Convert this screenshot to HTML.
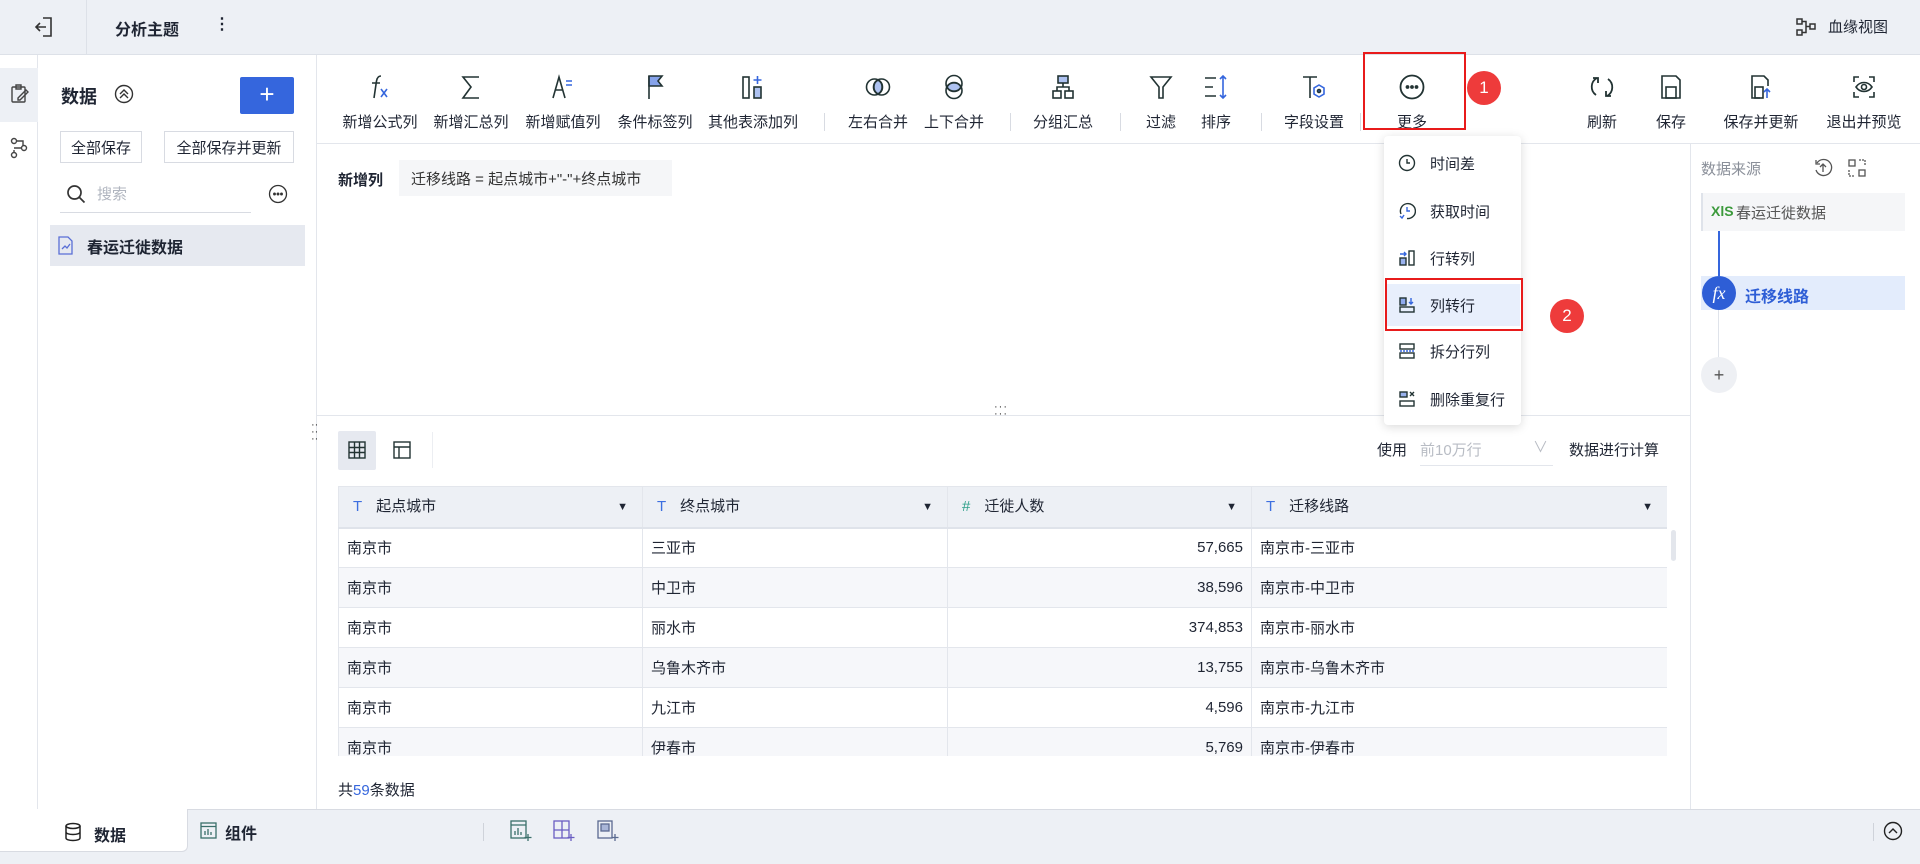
<!DOCTYPE html>
<html><head><meta charset="utf-8"><style>
*{box-sizing:border-box;margin:0;padding:0}
body{width:1920px;height:864px;overflow:hidden;font-family:"Liberation Sans","Noto Sans CJK SC",sans-serif;color:#1f2533;font-size:15px;background:#fff;position:relative}
.a{position:absolute}
.top{left:0;top:0;width:1920px;height:55px;background:#edf0f5;border-bottom:1px solid #dde1e8}
.tb-item{position:absolute;top:72px;width:100px;margin-left:-50px;text-align:center}
.tb-item svg{display:block;margin:0 auto;width:30px;height:30px}
.tb-item span{display:block;margin-top:9px;font-size:15px;white-space:nowrap}
.vd{position:absolute;top:113px;width:1px;height:18px;background:#d8dbe2}
.mi{position:absolute;left:1384px;width:137px;height:42px;display:flex;align-items:center;padding-left:14px;font-size:15px}
.mi svg{width:18px;height:18px;margin-right:14px}
table{border-collapse:collapse;table-layout:fixed}
td,th{border:1px solid #e3e6ec;height:40px;font-weight:normal;text-align:left;padding:0 8px;font-size:15px;white-space:nowrap}
th{height:41px;background:#edf0f5;border-bottom:2px solid #dfe3ea;padding-left:14px;line-height:20px}
th .t{color:#3d6fe0;margin-right:14px}
th .ar{float:right;font-size:11px;line-height:20px;margin-right:6px}
tr:nth-child(odd) td{background:#f6f7fa}
.btn{position:absolute;top:131px;height:32px;border:1px solid #d8dbe2;font-size:15px;display:flex;align-items:center;justify-content:center;background:#fff}
.badge{position:absolute;width:34px;height:34px;border-radius:50%;background:#ee3b3b;color:#fff;font-size:17px;display:flex;align-items:center;justify-content:center}
</style></head><body>

<div class="a top"></div>
<svg class="a" style="left:34px;top:16px" width="20" height="22" viewBox="0 0 20 22" fill="none" stroke="#333" stroke-width="1.6"><path d="M9 2h8v18H9M2 11h10M6 7l-4 4 4 4"/></svg>
<div class="a" style="left:86px;top:0;width:1px;height:55px;background:#dde1e8"></div>
<div class="a" style="left:115px;top:16px;font-size:16px;font-weight:bold">分析主题</div>
<div class="a" style="left:214px;top:14px;font-size:16px;font-weight:bold">⋮</div>
<svg class="a" style="left:1795px;top:17px" width="22" height="20" viewBox="0 0 22 20" fill="none" stroke="#333" stroke-width="1.5"><rect x="2" y="2" width="5" height="5"/><rect x="2" y="13" width="5" height="5"/><rect x="15" y="7" width="5" height="5"/><path d="M7 4.5h4v11H7M11 9.5h4"/></svg>
<div class="a" style="left:1828px;top:16px;font-size:15px">血缘视图</div>

<div class="a" style="left:0;top:55px;width:38px;height:755px;border-right:1px solid #e3e6ec"></div>
<div class="a" style="left:0;top:68px;width:38px;height:54px;background:#edf0f5"></div>
<svg class="a" style="left:10px;top:84px" width="20" height="20" viewBox="0 0 20 20" fill="none" stroke="#444" stroke-width="1.4"><rect x="2" y="3" width="13" height="15" rx="1"/><path d="M6 1h5v4H6zM8 14l8-8 2 2-8 8H8z"/></svg>
<svg class="a" style="left:9px;top:137px" width="20" height="22" viewBox="0 0 20 22" fill="none" stroke="#444" stroke-width="1.4"><circle cx="5" cy="4" r="2.5"/><circle cx="15" cy="11" r="2.5"/><circle cx="5" cy="18" r="2.5"/><path d="M7.5 4H14v5M12.5 11H5M5 13v2.5"/></svg>

<div class="a" style="left:316px;top:55px;width:1px;height:755px;background:#e3e6ec"></div>
<div class="a" style="left:61px;top:83px;font-size:18px;font-weight:bold">数据</div>
<svg class="a" style="left:114px;top:84px" width="20" height="20" viewBox="0 0 20 20" fill="none" stroke="#333" stroke-width="1.4"><circle cx="10" cy="10" r="8.5"/><path d="M6 10l4-4 4 4M6 14l4-4 4 4"/></svg>
<div class="a" style="left:240px;top:77px;width:54px;height:37px;background:#3566dd;border-radius:2px;color:#fff;font-size:26px;line-height:35px;text-align:center">+</div>
<div class="btn" style="left:60px;width:82px">全部保存</div>
<div class="btn" style="left:164px;width:130px">全部保存并更新</div>
<svg class="a" style="left:66px;top:184px" width="20" height="20" viewBox="0 0 20 20" fill="none" stroke="#333" stroke-width="1.7"><circle cx="8.5" cy="8.5" r="6.5"/><path d="M13.5 13.5l5 5"/></svg>
<div class="a" style="left:97px;top:183px;color:#b0b5bf">搜索</div>
<div class="a" style="left:60px;top:212px;width:191px;height:1px;background:#d8dbe2"></div>
<svg class="a" style="left:268px;top:184px" width="20" height="20" viewBox="0 0 20 20" fill="none" stroke="#333" stroke-width="1.3"><circle cx="10" cy="10" r="8.5"/><circle cx="6.5" cy="10" r=".8" fill="#333"/><circle cx="10" cy="10" r=".8" fill="#333"/><circle cx="13.5" cy="10" r=".8" fill="#333"/></svg>
<div class="a" style="left:50px;top:225px;width:255px;height:41px;background:#e6e9f0"></div>
<svg class="a" style="left:57px;top:236px" width="17" height="19" viewBox="0 0 17 19" fill="none" stroke="#5a6fd6" stroke-width="1.3"><path d="M2 1h9l4 4v13H2z"/><path d="M5 13l3-3 2 2 3-4" stroke="#5a6fd6"/></svg>
<div class="a" style="left:87px;top:234px;font-size:16px;font-weight:bold">春运迁徙数据</div>

<div class="a" style="left:317px;top:143px;width:1603px;height:1px;background:#e3e6ec"></div>
<div class="tb-item" style="left:380px"><svg viewBox="0 0 30 30" fill="none" stroke="#233" stroke-width="1.6"><path d="M16 4c-3 0-4 2-4.5 5L9 26M7 11h8"/><path d="M16 17l6 8M22 17l-6 8" stroke="#3566dd"/></svg><span>新增公式列</span></div>
<div class="tb-item" style="left:471px"><svg viewBox="0 0 30 30" fill="none" stroke="#233" stroke-width="1.6"><path d="M23 5H7l8 10-8 11h16"/></svg><span>新增汇总列</span></div>
<div class="tb-item" style="left:563px"><svg viewBox="0 0 30 30" fill="none" stroke="#233" stroke-width="1.6"><path d="M5 26L11 5l6 21M7.5 18h7"/><path d="M18 9h6M18 13h6" stroke="#3566dd"/></svg><span>新增赋值列</span></div>
<div class="tb-item" style="left:655px"><svg viewBox="0 0 30 30" fill="none" stroke="#233" stroke-width="1.6"><path d="M9 27V4"/><path d="M9 4h13l-4 5 4 5H9z" fill="#3566dd" fill-opacity=".6"/></svg><span>条件标签列</span></div>
<div class="tb-item" style="left:753px"><svg viewBox="0 0 30 30" fill="none" stroke="#233" stroke-width="1.6"><rect x="5" y="5" width="6" height="21"/><rect x="16" y="15" width="7" height="11" fill="#3566dd" fill-opacity=".4"/><path d="M19.5 4v8M15.5 8h8" stroke="#3566dd"/></svg><span>其他表添加列</span></div>
<div class="vd" style="left:824px"></div>
<div class="tb-item" style="left:878px"><svg viewBox="0 0 30 30" fill="none" stroke="#233" stroke-width="1.6"><circle cx="11.5" cy="15" r="8"/><circle cx="18.5" cy="15" r="8"/><path d="M15 8a8 8 0 0 1 0 14a8 8 0 0 1 0-14z" fill="#3566dd" fill-opacity=".4"/></svg><span>左右合并</span></div>
<div class="tb-item" style="left:954px"><svg viewBox="0 0 30 30" fill="none" stroke="#233" stroke-width="1.6"><circle cx="15" cy="11.5" r="8"/><circle cx="15" cy="18.5" r="8"/><path d="M8 15a8 8 0 0 1 14 0a8 8 0 0 1-14 0z" fill="#3566dd" fill-opacity=".4"/></svg><span>上下合并</span></div>
<div class="vd" style="left:1010px"></div>
<div class="tb-item" style="left:1063px"><svg viewBox="0 0 30 30" fill="none" stroke="#233" stroke-width="1.6"><rect x="10" y="4" width="10" height="7" fill="#3566dd" fill-opacity=".4"/><rect x="5" y="19" width="8" height="7"/><rect x="17" y="19" width="8" height="7"/><path d="M15 11v4M9 19v-4h12v4"/></svg><span>分组汇总</span></div>
<div class="vd" style="left:1120px"></div>
<div class="tb-item" style="left:1161px"><svg viewBox="0 0 30 30" fill="none" stroke="#233" stroke-width="1.6"><path d="M5 5h20l-8 10v11h-4V15z"/></svg><span>过滤</span></div>
<div class="tb-item" style="left:1216px"><svg viewBox="0 0 30 30" fill="none" stroke="#233" stroke-width="1.6"><path d="M4 6h11M4 15h8M4 24h11"/><path d="M22 4v22M19 7l3-3 3 3M19 23l3 3 3-3" stroke="#3566dd"/></svg><span>排序</span></div>
<div class="vd" style="left:1261px"></div>
<div class="tb-item" style="left:1314px"><svg viewBox="0 0 30 30" fill="none" stroke="#233" stroke-width="1.6"><path d="M4 5h14M11 5v21"/><path d="M20 13l5 3v6l-5 3-5-3v-6z" stroke="#3566dd"/><circle cx="20" cy="19" r="1.5" fill="#3566dd"/></svg><span>字段设置</span></div>
<div class="vd" style="left:1360px"></div>
<div class="tb-item" style="left:1412px"><svg viewBox="0 0 30 30" fill="none" stroke="#233" stroke-width="1.8"><circle cx="15" cy="15" r="11.5"/><circle cx="10.5" cy="15" r="1" fill="#233"/><circle cx="15" cy="15" r="1" fill="#233"/><circle cx="19.5" cy="15" r="1" fill="#233"/></svg><span>更多</span></div>
<div class="a" style="left:1363px;top:52px;width:103px;height:78px;border:2px solid #e81b1b"></div>
<div class="badge" style="left:1467px;top:71px">1</div>
<div class="tb-item" style="left:1602px"><svg viewBox="0 0 30 30" fill="none" stroke="#233" stroke-width="1.8"><path d="M10 6a10 10 0 0 0-1 17M20 24a10 10 0 0 0 1-17"/><path d="M6 6h5v5M24 24h-5v-5"/></svg><span>刷新</span></div>
<div class="tb-item" style="left:1671px"><svg viewBox="0 0 30 30" fill="none" stroke="#233" stroke-width="1.6"><path d="M6 4h14l4 4v18H6z"/><rect x="10" y="15" width="10" height="11"/></svg><span>保存</span></div>
<div class="tb-item" style="left:1761px"><svg viewBox="0 0 30 30" fill="none" stroke="#233" stroke-width="1.6"><path d="M22 14V8l-4-4H6v22h8"/><rect x="9" y="15" width="8" height="11"/><path d="M21 26v-9M18 20l3-3 3 3" stroke="#3566dd"/></svg><span>保存并更新</span></div>
<div class="tb-item" style="left:1864px"><svg viewBox="0 0 30 30" fill="none" stroke="#233" stroke-width="1.6"><path d="M5 10V5h5M20 5h5v5M25 20v5h-5M10 25H5v-5"/><path d="M7 15c4-6 12-6 16 0c-4 6-12 6-16 0z"/><circle cx="15" cy="15" r="2.5"/></svg><span>退出并预览</span></div>

<div class="a" style="left:338px;top:169px;font-weight:bold">新增列</div>
<div class="a" style="left:399px;top:160px;width:273px;height:36px;background:#f5f6f8;padding:8px 12px;color:#333">迁移线路 = 起点城市+"-"+终点城市</div>

<div class="a" style="left:316px;top:415px;width:1374px;height:1px;background:#e3e6ec"></div>
<div class="a" style="left:994px;top:404px;font-size:11px;letter-spacing:1px;line-height:7px;color:#333">···<br>···</div>
<div class="a" style="left:311px;top:422px;font-size:11px;line-height:7px;color:#333">··<br>··<br>··</div>

<div class="a" style="left:1384px;top:136px;width:137px;height:289px;background:#fff;border-radius:4px;box-shadow:0 2px 10px rgba(0,0,0,.15)"></div>
<div class="a" style="left:1385px;top:284px;width:135px;height:42px;background:#e8effc"></div>
<div class="mi" style="top:142px"><svg viewBox="0 0 18 18" fill="none" stroke="#233" stroke-width="1.4"><circle cx="9" cy="9" r="7.5"/><path d="M9 5v4h3"/></svg>时间差</div>
<div class="mi" style="top:190px"><svg viewBox="0 0 18 18" fill="none" stroke="#233" stroke-width="1.4"><path d="M3 12A7.5 7.5 0 1 1 9 16.5"/><path d="M9 5v4h3M2 14l2 2 2-3" stroke="#3566dd"/></svg>获取时间</div>
<div class="mi" style="top:237px"><svg viewBox="0 0 18 18" fill="none" stroke="#233" stroke-width="1.4"><rect x="11" y="2" width="5" height="14"/><rect x="2" y="9" width="6" height="7" fill="#3566dd" fill-opacity=".5"/><path d="M2 5h6M6 3l2 2-2 2" stroke="#3566dd"/></svg>行转列</div>
<div class="mi" style="top:284px"><svg viewBox="0 0 18 18" fill="none" stroke="#233" stroke-width="1.4"><rect x="2" y="11" width="14" height="5"/><rect x="2" y="2" width="6" height="7" fill="#3566dd" fill-opacity=".5"/><path d="M13 2v6M11 6l2 2 2-2" stroke="#3566dd"/></svg>列转行</div>
<div class="mi" style="top:330px"><svg viewBox="0 0 18 18" fill="none" stroke="#233" stroke-width="1.4"><rect x="2" y="2" width="14" height="5"/><rect x="2" y="11" width="14" height="5"/><path d="M2 9h14" stroke="#3566dd" stroke-dasharray="2 1"/></svg>拆分行列</div>
<div class="mi" style="top:378px"><svg viewBox="0 0 18 18" fill="none" stroke="#233" stroke-width="1.4"><rect x="2" y="2" width="7" height="5" fill="#3566dd" fill-opacity=".5"/><rect x="2" y="11" width="14" height="5"/><path d="M12 2l4 4M16 2l-4 4"/></svg>删除重复行</div>
<div class="a" style="left:1385px;top:278px;width:138px;height:53px;border:2px solid #e81b1b"></div>
<div class="badge" style="left:1550px;top:299px">2</div>

<div class="a" style="left:1690px;top:144px;width:1px;height:666px;background:#e3e6ec"></div>
<div class="a" style="left:1701px;top:158px;color:#8a8f99">数据来源</div>
<svg class="a" style="left:1813px;top:158px" width="20" height="20" viewBox="0 0 20 20" fill="none" stroke="#555" stroke-width="1.3"><path d="M4 5a8 8 0 1 1-1 7"/><path d="M10 14V6M7 9l3-3 3 3M3 2v4h4"/></svg>
<svg class="a" style="left:1847px;top:158px" width="20" height="20" viewBox="0 0 20 20" fill="none" stroke="#555" stroke-width="1.3"><rect x="2" y="2" width="6" height="6"/><rect x="12" y="12" width="6" height="6"/><path d="M12 2h6v6M2 12v6h6" stroke-dasharray="2 1"/></svg>
<div class="a" style="left:1701px;top:193px;width:204px;height:38px;background:#f5f6f8;border-left:2px solid #dfe3ea"></div>
<div class="a" style="left:1711px;top:203px;font-size:14px;color:#3c9a3c;font-weight:bold">XlS</div>
<div class="a" style="left:1736px;top:202px;font-size:15px;color:#555">春运迁徙数据</div>
<div class="a" style="left:1718px;top:231px;width:2px;height:50px;background:#3566dd"></div>
<div class="a" style="left:1718px;top:310px;width:1px;height:50px;background:#dfe3ea"></div>
<div class="a" style="left:1701px;top:276px;width:204px;height:34px;background:#e3ecfc"></div>
<div class="a" style="left:1702px;top:276px;width:34px;height:34px;border-radius:50%;background:#2e5ed6;color:#fff;font-style:italic;font-family:'Liberation Serif',serif;font-size:18px;text-align:center;line-height:34px">fx</div>
<div class="a" style="left:1745px;top:283px;color:#2e5ed6;font-size:16px;font-weight:bold">迁移线路</div>
<div class="a" style="left:1701px;top:357px;width:36px;height:36px;border-radius:50%;background:#eef0f4;color:#555;text-align:center;line-height:36px;font-size:18px">+</div>

<div class="a" style="left:338px;top:431px;width:38px;height:39px;background:#e6e9f0;border-radius:2px"></div>
<svg class="a" style="left:347px;top:440px" width="20" height="20" viewBox="0 0 20 20" fill="none" stroke="#233" stroke-width="1.4"><rect x="2" y="2" width="16" height="16"/><path d="M2 7.5h16M2 12.5h16M7.5 2v16M12.5 2v16"/></svg>
<svg class="a" style="left:392px;top:440px" width="20" height="20" viewBox="0 0 20 20" fill="none" stroke="#233" stroke-width="1.4"><rect x="2" y="2" width="16" height="16"/><path d="M2 7h16M7 7v11"/></svg>
<div class="a" style="left:432px;top:432px;width:1px;height:36px;background:#eceef2"></div>
<div class="a" style="left:1377px;top:439px">使用</div>
<div class="a" style="left:1420px;top:439px;color:#b8bcc4">前10万行</div>
<div class="a" style="left:1533px;top:436px;color:#b8bcc4">∨</div>
<div class="a" style="left:1420px;top:465px;width:133px;height:1px;background:#e3e6ec"></div>
<div class="a" style="left:1569px;top:439px">数据进行计算</div>

<div class="a" style="left:338px;top:486px;width:1329px;height:270px;overflow:hidden">
<table style="width:1329px">
<colgroup><col style="width:304px"><col style="width:305px"><col style="width:304px"><col style="width:416px"></colgroup>
<tr><th><span class="t">T</span>起点城市<span class="ar">▼</span></th><th><span class="t">T</span>终点城市<span class="ar">▼</span></th><th><span class="t" style="color:#2fa08a">#</span>迁徙人数<span class="ar">▼</span></th><th><span class="t">T</span>迁移线路<span class="ar">▼</span></th></tr>
<tr><td style="background:#fff">南京市</td><td style="background:#fff">三亚市</td><td style="text-align:right;background:#fff">57,665</td><td style="background:#fff">南京市-三亚市</td></tr>
<tr><td>南京市</td><td>中卫市</td><td style="text-align:right">38,596</td><td>南京市-中卫市</td></tr>
<tr><td style="background:#fff">南京市</td><td style="background:#fff">丽水市</td><td style="text-align:right;background:#fff">374,853</td><td style="background:#fff">南京市-丽水市</td></tr>
<tr><td>南京市</td><td>乌鲁木齐市</td><td style="text-align:right">13,755</td><td>南京市-乌鲁木齐市</td></tr>
<tr><td style="background:#fff">南京市</td><td style="background:#fff">九江市</td><td style="text-align:right;background:#fff">4,596</td><td style="background:#fff">南京市-九江市</td></tr>
<tr><td>南京市</td><td>伊春市</td><td style="text-align:right">5,769</td><td>南京市-伊春市</td></tr>
</table></div>
<div class="a" style="left:1671px;top:530px;width:5px;height:31px;border-radius:3px;background:#e3e6ec"></div>
<div class="a" style="left:338px;top:779px">共<span style="color:#3566dd">59</span>条数据</div>

<div class="a" style="left:0;top:809px;width:1920px;height:55px;background:#edf0f5;border-top:1px solid #d8dbe2"></div>
<div class="a" style="left:0;top:809px;width:188px;height:43px;background:#fff;border-bottom-right-radius:6px;border-right:1px solid #d8dbe2;border-bottom:1px solid #d8dbe2"></div>
<svg class="a" style="left:64px;top:822px" width="18" height="20" viewBox="0 0 18 20" fill="none" stroke="#222" stroke-width="1.5"><ellipse cx="9" cy="4" rx="7" ry="2.5"/><path d="M2 4v12c0 1.5 3 2.5 7 2.5s7-1 7-2.5V4M2 10c0 1.5 3 2.5 7 2.5s7-1 7-2.5"/></svg>
<div class="a" style="left:94px;top:822px;font-size:16px;font-weight:bold">数据</div>
<svg class="a" style="left:200px;top:822px" width="17" height="17" viewBox="0 0 17 17" fill="none" stroke="#3a6f6a" stroke-width="1.3"><rect x="1" y="1" width="15" height="15"/><path d="M1 4.5h15M5 13V9M8 13V7M11 13v-3"/></svg>
<div class="a" style="left:225px;top:820px;font-size:16px;font-weight:bold">组件</div>
<div class="a" style="left:483px;top:823px;width:1px;height:18px;background:#cfd3da"></div>
<svg class="a" style="left:510px;top:820px" width="22" height="22" viewBox="0 0 22 22" fill="none" stroke="#3a6f6a" stroke-width="1.3"><rect x="1" y="1" width="15" height="17"/><path d="M1 5h15M5 15v-4M8 15V8M11 15v-3M18 14v7M14.5 17.5h7"/></svg>
<svg class="a" style="left:553px;top:820px" width="22" height="22" viewBox="0 0 22 22" fill="none" stroke="#6a5ec2" stroke-width="1.3"><rect x="1" y="1" width="15" height="17"/><path d="M9 1v17M1 10h15M18 14v7M14.5 17.5h7"/></svg>
<svg class="a" style="left:597px;top:820px" width="22" height="22" viewBox="0 0 22 22" fill="none" stroke="#5a6a90" stroke-width="1.3"><rect x="1" y="1" width="14" height="17"/><rect x="4" y="4" width="8" height="7" fill="#a9b6d8"/><path d="M18 14v7M14.5 17.5h7"/></svg>
<div class="a" style="left:1873px;top:823px;width:1px;height:18px;background:#cfd3da"></div>
<svg class="a" style="left:1883px;top:821px" width="20" height="20" viewBox="0 0 20 20" fill="none" stroke="#222" stroke-width="1.4"><circle cx="10" cy="10" r="8.5"/><path d="M6 12l4-4 4 4"/></svg>
</body></html>
